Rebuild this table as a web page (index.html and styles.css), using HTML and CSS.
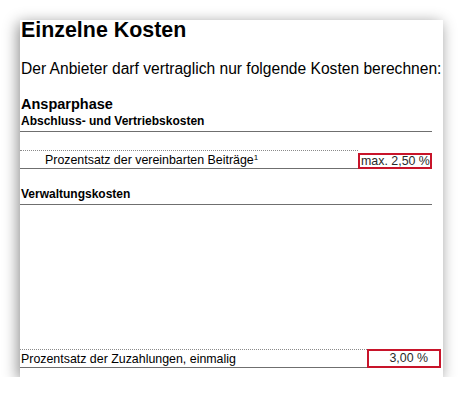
FILE: index.html
```html
<!DOCTYPE html>
<html lang="de">
<head>
  <meta charset="UTF-8">
  <title>Einzelne Kosten</title>
  <link rel="stylesheet" href="styles.css">
</head>
<body>
  <div class="sheet">
    <h1>Einzelne Kosten</h1>
    <p class="intro">Der Anbieter darf vertraglich nur folgende Kosten berechnen:</p>

    <h2>Ansparphase</h2>
    <h3>Abschluss- und Vertriebskosten</h3>
    <div class="row row-indent">
      <span class="label">Prozentsatz der vereinbarten Beiträge<sup>1</sup></span>
      <span class="value">max. 2,50 %</span>
    </div>

    <h3 class="admin">Verwaltungskosten</h3>

    <div class="spacer"></div>

    <div class="row row-wide">
      <span class="label">Prozentsatz der Zuzahlungen, einmalig</span>
      <span class="value">3,00 %</span>
    </div>
  </div>
</body>
</html>
```

FILE: styles.css
```css
body {
  margin: 0;
  background: #fff;
  font-family: 'Liberation Sans', Arial, sans-serif;
  color: #000;
}
.sheet {
  margin: 20px 0 0 20px;
  width: 423px;
  height: 357px;
  padding-left: 1px;
  box-sizing: border-box;
  background: #fff;
  box-shadow: -2px 3px 14px rgba(0, 0, 0, 0.45);
  display: flex;
  flex-direction: column;
}
h1 {
  margin: 0;
  font-size: 21.4px;
  line-height: 20px;
}
.intro {
  margin: 20px 0 0;
  font-size: 15.6px;
  line-height: 18px;
  white-space: nowrap;
}
h2 {
  margin: 20px 0 0;
  font-size: 14.5px;
  line-height: 13px;
}
h3 {
  margin: 4px 11px 0 -1px;
  padding: 0 0 4px 1px;
  font-size: 12px;
  line-height: 12px;
  border-bottom: 1px solid #6f6f6f;
}
h3.admin {
  margin-top: 19px;
  padding-bottom: 4px;
}

/* label cell between a dotted rule and a solid one, value in a red frame */
.row {
  display: flex;
  align-items: flex-start;
  font-size: 12.4px;
  white-space: nowrap;
}
.row .label {
  flex: 1;
  margin-left: -1px;
  padding: 2px 0 1px 1px;
  line-height: 14px;
  border-top: 1px dotted #8a8a8a;
  border-bottom: 1px solid #6f6f6f;
}
.row .label sup {
  font-size: 8px;
  line-height: 0;
  vertical-align: 4px;
}
.row .value {
  width: 74px;
  box-sizing: border-box;
  border: 2px solid #c8142a;
  color: #2a2a2a;
}
.row-indent {
  margin: 18px 11px 0 0;
}
.row-indent .label {
  padding-left: 25px;
}
.row-indent .value {
  margin-top: 3px;
  padding: 0 1px;
  line-height: 12px;
}
.spacer {
  flex: 1;
}
.row-wide {
  margin: 0 2px 9px 0;
}
.row-wide .value {
  padding-right: 11px;
  line-height: 15px;
  text-align: right;
}
```
